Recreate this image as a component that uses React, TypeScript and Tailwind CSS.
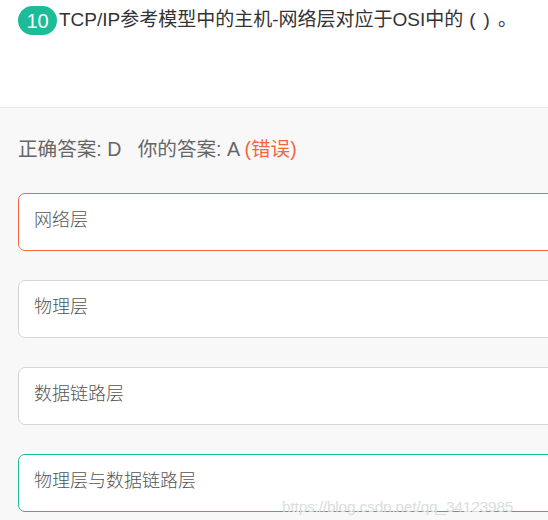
const options = [
  { text: "网络层", state: "wrong" },
  { text: "物理层", state: "none" },
  { text: "数据链路层", state: "none" },
  { text: "物理层与数据链路层", state: "right" },
];

export default function App() {
  return (
    <div className="relative w-[548px] h-[520px] overflow-hidden bg-[#f8f8f8] font-['Liberation_Sans','Noto_Sans_CJK_SC',sans-serif]">
      <div className="h-[108px] bg-white border-b border-[#e8e8e8] pt-[6px] pl-[18px]">
        <div className="flex items-center gap-[2px]">
          <span className="flex h-[29px] w-[39px] items-center justify-center rounded-full bg-[#1cbc98] text-[20px] text-white">
            10
          </span>
          <span className="text-[19px] text-[#333]">
            TCP/IP参考模型中的主机-网络层对应于OSI中的<span className="tracking-[8px] pl-[6px]">()</span>。
          </span>
        </div>
      </div>

      <div className="pl-[18px] pt-[29px]">
        <p className="h-[24px] leading-[24px] text-[19.6px] text-[#666]">
          正确答案: D&nbsp;&nbsp;&nbsp;你的答案: A <span className="text-[#f7663f]">(错误)</span>
        </p>

        <div className="mt-[32px] flex flex-col gap-[29px]">
          {options.map((o) => (
            <div
              key={o.text}
              className={
                o.state === "wrong"
                  ? "h-[58px] w-[560px] rounded-[7px] border border-[#f7663f] bg-white pl-[15px] flex items-center"
                  : o.state === "right"
                  ? "h-[58px] w-[560px] rounded-[7px] border border-[#1cbc98] bg-white pl-[15px] flex items-center"
                  : "h-[58px] w-[560px] rounded-[7px] border border-[#d6d6d6] bg-white pl-[15px] flex items-center"
              }
            >
              <span className="-mt-[3px] text-[18px] font-light text-[#555]">{o.text}</span>
            </div>
          ))}
        </div>
      </div>

      <span className="absolute left-[282px] top-[495px] text-[15.5px] tracking-[-0.2px] text-[#dcdcdc]">
        https://blog.csdn.net/qq_34123985
      </span>
    </div>
  );
}
